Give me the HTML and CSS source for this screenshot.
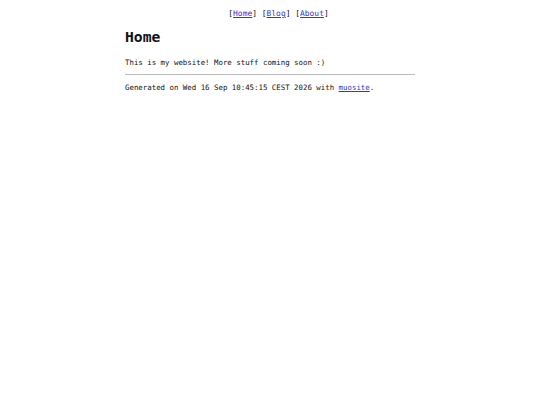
FILE: index.html
```html
<!DOCTYPE html>
<html>
<head>
<meta charset="utf-8">
<title>Home</title>
<link rel="stylesheet" href="styles.css">
</head>
<body>
<nav class="nav">[<a href="#">Home</a>] [<a href="#">Blog</a>] [<a href="#">About</a>]</nav>
<main class="page">
<h1 class="title">Home</h1>
<p class="text">This is my website! More stuff coming soon :)</p>
<hr class="rule">
<footer class="foot">Generated on Wed 16 Sep 10:45:15 CEST 2026 with <a href="#">muosite</a>.</footer>
</main>
</body>
</html>
```
FILE: styles.css
```css
html, body {
  margin: 0;
  padding: 0;
  background: #fff;
}
body {
  font-family: "DejaVu Sans Mono", "Liberation Mono", monospace;
  color: #111;
  font-size: 7.4px;
}
a {
  color: #3535c8;
}
.nav {
  text-align: center;
  font-size: 7.95px;
  padding: 9px 0 0 17px;
  line-height: 10px;
}
.page {
  width: 290px;
  margin: 0 auto;
}
.title {
  font-size: 14.7px;
  font-weight: bold;
  margin: 9px 0 0;
  line-height: 18px;
}
.text {
  margin: 12px 0 0;
  line-height: 10px;
}
.rule {
  border: 0;
  border-top: 1px solid #bbb;
  margin: 6px 0 0;
  height: 0;
}
.foot {
  margin-top: 8px;
  line-height: 10px;
}
```
